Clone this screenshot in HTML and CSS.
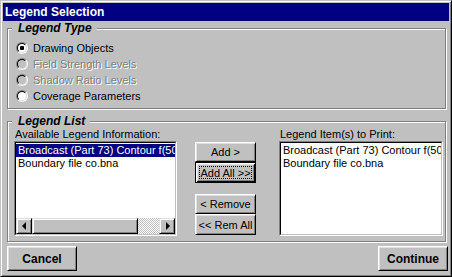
FILE: index.html
```html
<!DOCTYPE html>
<html lang="en">
<head>
    <title>Legend Selection</title>
    <link rel="stylesheet" href="styles.css">
</head>
<body>
<div class="window">
    <div class="titlebar">Legend Selection</div>

    <div class="group group-type">
        <div class="group-title">Legend Type</div>
        <ul class="radio-list">
            <li class="radio-item"><span class="radio checked"><span class="radio-inner"></span></span>Drawing Objects</li>
            <li class="radio-item disabled"><span class="radio"><span class="radio-inner"></span></span>Field Strength Levels</li>
            <li class="radio-item disabled"><span class="radio"><span class="radio-inner"></span></span>Shadow Ratio Levels</li>
            <li class="radio-item"><span class="radio"><span class="radio-inner"></span></span>Coverage Parameters</li>
        </ul>
    </div>

    <div class="group group-list">
        <div class="group-title">Legend List</div>
        <div class="list-columns">
            <div class="list-column list-available">
                <div class="list-label">Available Legend Information:</div>
                <div class="listbox">
                    <div class="listbox-inner">
                        <div class="listbox-items">
                            <div class="listbox-item selected">Broadcast (Part 73) Contour f(50,50)</div>
                            <div class="listbox-item">Boundary file co.bna</div>
                        </div>
                        <!-- horizontal scrollbar -->
                        <div class="hscroll">
                            <span class="scroll-btn"><span class="arrow-left"></span></span>
                            <span class="scroll-thumb"></span>
                            <span class="scroll-track"></span>
                            <span class="scroll-btn"><span class="arrow-right"></span></span>
                        </div>
                    </div>
                </div>
            </div>

            <div class="move-buttons">
                <button class="btn btn-add">Add &gt;</button>
                <button class="btn btn-default btn-add-all"><span class="focus">Add All &gt;&gt;</span></button>
                <button class="btn btn-remove">&lt; Remove</button>
                <button class="btn btn-rem-all">&lt;&lt; Rem All</button>
            </div>

            <div class="list-column list-print">
                <div class="list-label">Legend Item(s) to Print:</div>
                <div class="listbox">
                    <div class="listbox-inner">
                        <div class="listbox-items">
                            <div class="listbox-item">Broadcast (Part 73) Contour f(50,50)</div>
                            <div class="listbox-item">Boundary file co.bna</div>
                        </div>
                    </div>
                </div>
            </div>
        </div>
    </div>

    <div class="footer">
        <button class="btn btn-big">Cancel</button>
        <button class="btn btn-big">Continue</button>
    </div>
</div>
</body>
</html>
```

FILE: styles.css
```css
body {
    margin: 0;
    font-family: "Liberation Sans", Arial, sans-serif;
    font-size: 11px;
    color: #000;
}

.window {
    width: 452px;
    height: 277px;
    box-sizing: border-box;
    background-color: #c0c0c0;
    border: 1px solid;
    border-color: #c0c0c0 #000 #000 #c0c0c0;
    box-shadow: inset 1px 1px #fff, inset -1px -1px #808080;
    padding: 2px;
}

.titlebar {
    height: 18px;
    line-height: 18px;
    padding-left: 2px;
    background-color: #000080;
    color: #fff;
    font-weight: bold;
    font-size: 12px;
}

/* group boxes */
.group {
    border: 1px solid #808080;
    box-shadow: inset 1px 1px #fff, 1px 1px #fff;
    margin: 0 3px 0 4px;
}

.group-type {
    margin-top: 7px;
    padding-bottom: 4px;
}

.group-list {
    margin-top: 12px;
    padding-bottom: 5px;
}

.group-title {
    width: max-content;
    margin: -8px 0 0 4px;
    padding: 0 5px 0 6px;
    background-color: #c0c0c0;
    font-style: italic;
    font-weight: bold;
    font-size: 12px;
    line-height: 15px;
}

.radio-list {
    list-style: none;
    margin: 4px 0 0 8px;
    padding: 0;
}

.radio-item {
    display: flex;
    align-items: center;
    height: 16px;
    gap: 5px;
}

.radio-item.disabled {
    color: #808080;
    text-shadow: 1px 1px #fff;
}

.radio {
    flex: none;
    width: 12px;
    height: 12px;
    box-sizing: border-box;
    border-radius: 50%;
    border: 1px solid;
    border-color: #808080 #fff #fff #808080;
}

.radio-inner {
    display: flex;
    align-items: center;
    justify-content: center;
    width: 100%;
    height: 100%;
    box-sizing: border-box;
    border-radius: 50%;
    border: 1px solid;
    border-color: #000 #dfdfdf #dfdfdf #000;
    background-color: #fff;
}

.disabled .radio-inner {
    background-color: #c0c0c0;
}

.radio.checked .radio-inner::after {
    content: '';
    width: 4px;
    height: 4px;
    border-radius: 1px;
    background-color: #000;
}

/* list columns */
.list-columns {
    display: flex;
    margin: -1px 0 0 6px;
}

.list-available {
    width: 163px;
}

.list-print {
    width: 164px;
    margin-left: 23px;
}

.list-label {
    line-height: 13px;
    padding-left: 1px;
    white-space: nowrap;
}

.listbox {
    height: 95px;
    box-sizing: border-box;
    border: 1px solid;
    border-color: #808080 #fff #fff #808080;
}

.listbox-inner {
    height: 100%;
    box-sizing: border-box;
    border: 1px solid;
    border-color: #000 #c0c0c0 #c0c0c0 #000;
    background-color: #fff;
    display: flex;
    flex-direction: column;
}

.listbox-items {
    flex: 1;
    padding-top: 1px;
    overflow: hidden;
}

.listbox-item {
    height: 13px;
    line-height: 13px;
    padding-left: 2px;
    white-space: nowrap;
    overflow: hidden;
}

.listbox-item.selected {
    background-color: #000080;
    color: #fff;
}

.hscroll {
    flex: none;
    display: flex;
    height: 16px;
}

.scroll-btn, .scroll-thumb {
    box-sizing: border-box;
    background-color: #c0c0c0;
    border: 1px solid;
    border-color: #dfdfdf #000 #000 #dfdfdf;
    box-shadow: inset 1px 1px #fff, inset -1px -1px #808080;
}

.scroll-btn {
    width: 16px;
    display: flex;
    align-items: center;
    justify-content: center;
}

.scroll-thumb {
    width: 106px;
}

.scroll-track {
    flex: 1;
    background: repeating-conic-gradient(#fff 0 25%, #c0c0c0 0 50%) 0 0 / 2px 2px;
}

.arrow-left, .arrow-right {
    width: 0;
    height: 0;
    border-top: 4px solid transparent;
    border-bottom: 4px solid transparent;
}

.arrow-left {
    border-right: 4px solid #000;
    margin-left: -1px;
}

.arrow-right {
    border-left: 4px solid #000;
    margin-left: 1px;
}

/* buttons */
.btn {
    font-family: "Liberation Sans", Arial, sans-serif;
    font-size: 11px;
    color: #000;
    background-color: #c0c0c0;
    border: 1px solid;
    border-color: #fff #000 #000 #fff;
    box-shadow: inset 1px 1px #dfdfdf, inset -1px -1px #808080;
    padding: 0;
    box-sizing: border-box;
    display: flex;
    align-items: center;
    justify-content: center;
}

.btn-default {
    border-color: #000;
    box-shadow: inset 1px 1px #fff, inset -1px -1px #000, inset 2px 2px #dfdfdf, inset -2px -2px #808080;
    padding: 3px;
}

.focus {
    display: flex;
    align-items: center;
    justify-content: center;
    width: 100%;
    height: 100%;
    box-sizing: border-box;
    border: 1px dotted #000;
}

.move-buttons {
    width: 61px;
    margin-left: 18px;
    padding-top: 14px;
    display: flex;
    flex-direction: column;
}

.btn-add, .btn-remove {
    height: 20px;
}

.btn-add-all, .btn-rem-all {
    height: 21px;
}

.btn-remove {
    margin-top: 11px;
}

.footer {
    display: flex;
    justify-content: space-between;
    margin-top: 4px;
    padding: 0 1px 0 4px;
}

.btn-big {
    width: 70px;
    height: 25px;
    font-size: 12px;
    font-weight: bold;
}
```
